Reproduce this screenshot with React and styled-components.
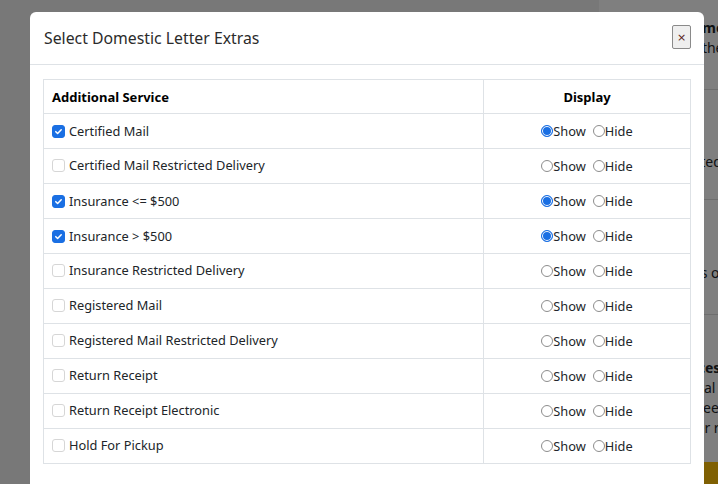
import React from 'react';
import styled, { createGlobalStyle } from 'styled-components';

const GlobalStyle = createGlobalStyle`
  html, body {
    margin: 0;
    padding: 0;
    overflow: hidden;
  }
  body {
    font-family: "Noto Sans", "Open Sans", Arial, sans-serif;
    font-size: 12.8px;
    color: #212529;
  }
`;

const extras = [
  { name: 'Certified Mail', checked: true, show: true },
  { name: 'Certified Mail Restricted Delivery', checked: false, show: false },
  { name: 'Insurance <= $500', checked: true, show: true },
  { name: 'Insurance > $500', checked: true, show: true },
  { name: 'Insurance Restricted Delivery', checked: false, show: false },
  { name: 'Registered Mail', checked: false, show: false },
  { name: 'Registered Mail Restricted Delivery', checked: false, show: false },
  { name: 'Return Receipt', checked: false, show: false },
  { name: 'Return Receipt Electronic', checked: false, show: false },
  { name: 'Hold For Pickup', checked: false, show: false },
];

/* page sitting behind the dialog */
const Page = styled.div`
  display: flex;
  height: 100vh;
  width: 100vw;
`;

const Main = styled.div`
  width: 599px;
  flex-shrink: 0;
  background: #f1f1f1;
`;

const Sidebar = styled.aside`
  flex: 1;
  background: #ffffff;
  display: flex;
  flex-direction: column;
  white-space: nowrap;
  overflow: hidden;
  font-size: 14px;
`;

const SideSection = styled.div`
  flex-shrink: 0;
  padding: ${(p) => p.$pad || '14px 12px'};
  border-bottom: ${(p) => (p.$divider ? '1px solid #dcdcdc' : 'none')};
  height: ${(p) => p.$h || 'auto'};
  box-sizing: border-box;
  line-height: 20px;
`;

const SideTitle = styled.div`
  font-weight: 700;
  font-size: 14px;
`;

const SideButton = styled.div`
  margin-top: 24px;
  background: #ffc107;
  border-radius: 6px;
  height: 36px;
  width: 140px;
`;

/* dialog */
const Backdrop = styled.div`
  position: fixed;
  inset: 0;
  background: rgba(0, 0, 0, 0.5);
  padding: 12px 0 0 30px;
`;

const Modal = styled.div`
  width: 674px;
  height: 520px;
  background: #ffffff;
  border-radius: 6px;
  box-sizing: border-box;
`;

const ModalHeader = styled.div`
  display: flex;
  align-items: center;
  justify-content: space-between;
  height: 53px;
  padding: 0 13px 0 14px;
  border-bottom: 1px solid #dee2e6;
  box-sizing: border-box;
`;

const Title = styled.h5`
  margin: 0;
  font-size: 15.8px;
  font-weight: 400;
  color: #2b2b2b;
`;

const CloseButton = styled.button`
  width: 19px;
  height: 24px;
  padding: 0;
  margin-top: -2px;
  border: 1px solid #8a8a8a;
  background: #efefef;
  color: #5a1c1c;
  font-family: "DejaVu Sans", sans-serif;
  font-size: 11px;
  line-height: 1;
  border-radius: 2px;
`;

const ModalBody = styled.div`
  padding: 14px 13px;
`;

const Table = styled.table`
  width: 100%;
  border-collapse: collapse;
  table-layout: fixed;
`;

const HeadCell = styled.th`
  box-sizing: border-box;
  border: 1px solid #dee2e6;
  height: 34px;
  padding: 0 8px;
  font-size: 13px;
  font-weight: 700;
  color: #000;
  text-align: ${(p) => (p.$center ? 'center' : 'left')};
  width: ${(p) => p.$w || 'auto'};
`;

const Cell = styled.td`
  box-sizing: border-box;
  border: 1px solid #dee2e6;
  height: 35px;
  padding: 0 8px;
  line-height: 18px;
  vertical-align: middle;
  text-align: ${(p) => (p.$center ? 'center' : 'left')};
`;

const CheckLabel = styled.label`
  display: inline-flex;
  align-items: center;
  gap: 4px;
`;

const Box = styled.span`
  width: 13px;
  height: 13px;
  box-sizing: border-box;
  border-radius: 3px;
  border: 1px solid ${(p) => (p.$checked ? '#1a6fe3' : '#d6d6d6')};
  background: ${(p) => (p.$checked ? '#1a6fe3' : '#fff')};
  display: inline-flex;
  align-items: center;
  justify-content: center;
`;

const RadioGroup = styled.span`
  display: inline-flex;
  align-items: center;
  gap: 7px;
`;

const RadioLabel = styled.label`
  display: inline-flex;
  align-items: center;
`;

const Dot = styled.span`
  width: 12px;
  height: 12px;
  box-sizing: border-box;
  border-radius: 50%;
  border: 1px solid ${(p) => (p.$on ? '#1a6fe3' : '#8d8d8d')};
  background: ${(p) => (p.$on ? '#1a6fe3' : '#fff')};
  box-shadow: ${(p) => (p.$on ? 'inset 0 0 0 1px #fff' : 'none')};
`;

const Check = ({ checked, children }) => (
  <CheckLabel>
    <Box $checked={checked}>
      {checked && (
        <svg width="9" height="9" viewBox="0 0 10 10">
          <path d="M2 5.2l2 2 4-4.2" fill="none" stroke="#fff" strokeWidth="1.7" strokeLinecap="round" strokeLinejoin="round" />
        </svg>
      )}
    </Box>
    {children}
  </CheckLabel>
);

const ShowHide = ({ show }) => (
  <RadioGroup>
    <RadioLabel><Dot $on={show} />Show</RadioLabel>
    <RadioLabel><Dot $on={false} />Hide</RadioLabel>
  </RadioGroup>
);

export default function App() {
  return (
    <>
      <GlobalStyle />
      <Page>
        <Main />
        <Sidebar>
          <SideSection $divider $h="90px" $pad="18px 12px 14px">
            <SideTitle>Customer Home</SideTitle>
            <div>Manage your themes</div>
          </SideSection>
          <SideSection $divider $h="110px" $pad="62px 12px 14px">
            <div>Extras requested</div>
          </SideSection>
          <SideSection $divider $h="115px" $pad="63px 12px 14px">
            <div>Address books on file</div>
          </SideSection>
          <SideSection $pad="43px 12px 14px">
            <SideTitle>Sender Services</SideTitle>
            <div>Choose a postal user</div>
            <div>Check all the fees now</div>
            <div>Compare letter rates</div>
            <SideButton />
          </SideSection>
        </Sidebar>
      </Page>
      <Backdrop>
        <Modal>
          <ModalHeader>
            <Title>Select Domestic Letter Extras</Title>
            <CloseButton>×</CloseButton>
          </ModalHeader>
          <ModalBody>
            <Table>
              <thead>
                <tr>
                  <HeadCell $w="440px">Additional Service</HeadCell>
                  <HeadCell $center>Display</HeadCell>
                </tr>
              </thead>
              <tbody>
                {extras.map((e) => (
                  <tr key={e.name}>
                    <Cell>
                      <Check checked={e.checked}>{e.name}</Check>
                    </Cell>
                    <Cell $center>
                      <ShowHide show={e.show} />
                    </Cell>
                  </tr>
                ))}
              </tbody>
            </Table>
          </ModalBody>
        </Modal>
      </Backdrop>
    </>
  );
}
